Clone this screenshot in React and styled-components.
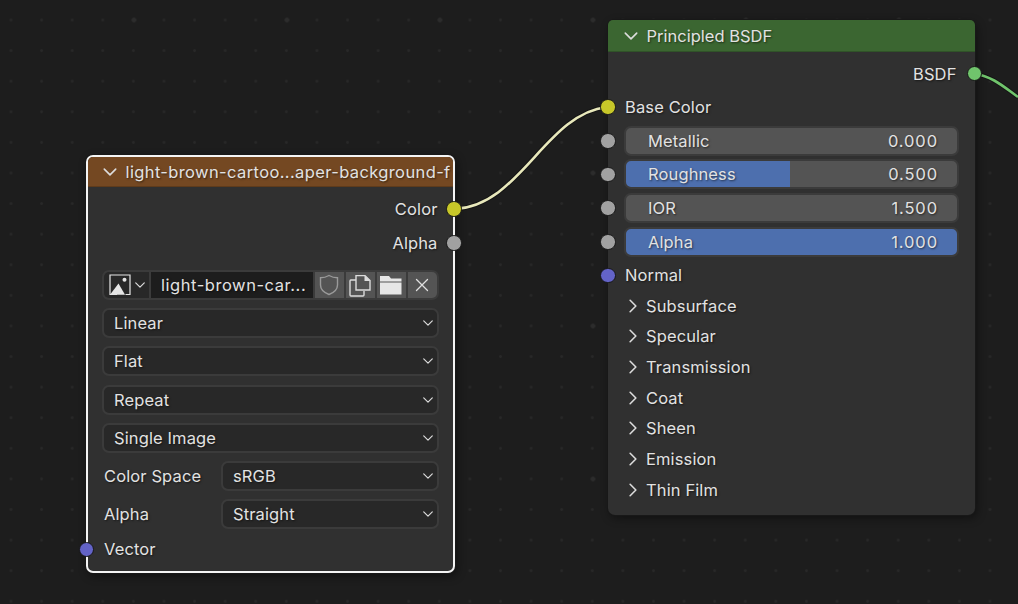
import React from 'react'
import styled, { createGlobalStyle } from 'styled-components'

const GlobalStyle = createGlobalStyle`
  html, body {
    margin: 0;
    padding: 0;
    background: #1d1d1d;
  }
`

const Canvas = styled.div`
  position: relative;
  width: 1018px;
  height: 604px;
  overflow: hidden;
  font-family: Inter, "Noto Sans", sans-serif;
  font-size: 16.5px;
  letter-spacing: 0.12px;
  color: #e2e2e2;
  text-shadow: 1px 1px 2px rgba(0, 0, 0, 0.55);
  background-color: #1d1d1d;
  background-image:
    radial-gradient(circle, #2c2c2c 0, #2c2c2c 2px, transparent 2.6px),
    radial-gradient(circle, #282828 0, #272727 1.1px, transparent 1.8px);
  background-size: 153px 153px, 30.6px 30.6px;
  background-position: 57.5px -56.5px, -4.3px 4.7px;
`

const Wires = styled.svg`
  position: absolute;
  left: 0;
  top: 0;
  width: 1018px;
  height: 604px;
`

const Node = styled.div`
  position: absolute;
  left: ${p => p.$x}px;
  top: ${p => p.$y}px;
  width: ${p => p.$w}px;
  height: ${p => p.$h}px;
  box-sizing: border-box;
  display: flex;
  flex-direction: column;
  background: #303030;
  border-radius: 7px;
  border: ${p => (p.$selected ? '2px solid #f4f4f4' : '0 solid transparent')};
  box-shadow: 0 0 0 1px #181818, 2px 3px 10px rgba(0, 0, 0, 0.45);
`

const Header = styled.div`
  flex: none;
  box-sizing: border-box;
  height: ${p => p.$h}px;
  display: flex;
  align-items: center;
  gap: 7.5px;
  padding-left: ${p => p.$pad}px;
  background: ${p => p.$color};
  border-radius: 5px 5px 0 0;
  white-space: nowrap;
  overflow: hidden;
  letter-spacing: ${p => p.$spacing || 0}px;
  box-shadow: inset 0 -1px 0 rgba(0, 0, 0, 0.18);
`

const Body = styled.div`
  flex: none;
  display: flex;
  flex-direction: column;
  gap: ${p => p.$gap}px;
  padding: ${p => p.$top}px ${p => p.$right}px 0 ${p => p.$left}px;
`

const SocketRow = styled.div`
  position: relative;
  flex: none;
  height: 28px;
  margin-top: ${p => p.$lift || 0}px;
  display: flex;
  align-items: center;
  justify-content: ${p => (p.$output ? 'flex-end' : 'flex-start')};
`

const Socket = styled.span`
  position: absolute;
  top: 50%;
  ${p => (p.$output ? `right: ${p.$off}px;` : `left: ${p.$off}px;`)}
  width: 13.5px;
  height: 13.5px;
  margin-top: -7.75px;
  border-radius: 50%;
  border: 1px solid #161616;
  background: ${p => p.$color};
`

const Dropdown = styled.div`
  flex: ${p => (p.$grow ? 1 : 'none')};
  box-sizing: border-box;
  height: 30px;
  display: flex;
  align-items: center;
  justify-content: space-between;
  padding: 0 3px 0 10px;
  background: #282828;
  border: 2px solid #3b3b3b;
  border-radius: 7px;
`

const FieldRow = styled.div`
  flex: none;
  height: 30px;
  display: flex;
  align-items: center;
`

const FieldLabel = styled.span`
  flex: none;
  width: 119px;
  padding-left: 2px;
  box-sizing: border-box;
`

const VectorLabel = styled.span`
  padding-left: 2px;
`

const OutputLabel = styled.span`
  padding-right: ${p => p.$pad}px;
`

const ImageBar = styled.div`
  flex: none;
  box-sizing: border-box;
  height: 30px;
  display: flex;
  align-items: stretch;
  gap: 2px;
  padding: 2px;
  margin-top: 13px;
  background: #3b3b3b;
  border-radius: 7px;
`

const ImagePicker = styled.div`
  flex: none;
  width: 45px;
  display: flex;
  align-items: center;
  gap: 3px;
  padding-left: 5px;
  box-sizing: border-box;
  background: #282828;
  border-radius: 5px 0 0 5px;
`

const NameField = styled.div`
  flex: 1;
  min-width: 0;
  display: flex;
  align-items: center;
  padding-left: 10px;
  background: #1d1d1d;
  white-space: nowrap;
  letter-spacing: 0.55px;
`

const IconButton = styled.div`
  flex: none;
  width: 29px;
  display: flex;
  align-items: center;
  justify-content: center;
  background: #545454;
  border-radius: ${p => (p.$last ? '0 5px 5px 0' : '0')};
`

const Slider = styled.div`
  flex: none;
  box-sizing: border-box;
  width: calc(100% + 1.5px);
  height: 30px;
  margin-left: -1.5px;
  display: flex;
  align-items: center;
  justify-content: space-between;
  padding: 0 18.5px 0 22.5px;
  border: 2px solid #3b3b3b;
  border-radius: 7px;
  background: linear-gradient(
    to right,
    #4d6fae ${p => p.$fill}%,
    #545454 ${p => p.$fill}%
  );
`

const SliderValue = styled.span`
  letter-spacing: 0.9px;
`

const PanelList = styled.div`
  display: flex;
  flex-direction: column;
  margin-top: -4.67px;
`

const PanelRow = styled.div`
  flex: none;
  height: 30.67px;
  display: flex;
  align-items: center;
  gap: 5px;
`

const IconSvg = styled.svg`
  flex: none;
`

const Chevron = ({ dir = 'down', size = 16, width = 1.4, color = '#dcdcdc' }) => (
  <IconSvg width={size} height={size} viewBox="0 0 14 14" fill="none">
    <path
      d={dir === 'down' ? 'M2 4.5 L7 9.5 L12 4.5' : 'M4.5 2 L9.5 7 L4.5 12'}
      stroke={color}
      strokeWidth={width}
      strokeLinecap="round"
      strokeLinejoin="round"
    />
  </IconSvg>
)

const ImageIcon = () => (
  <IconSvg width="22" height="22" viewBox="0 0 22 22" fill="none">
    <path d="M8 20.5 H1 V1 H21 V20.5 H16.5 M21 20.5 H18" stroke="#e6e6e6" strokeWidth="1.2" />
    <path d="M1 20.8 L9.5 9.5 L16 20.8 Z" fill="#e6e6e6" />
    <circle cx="15.5" cy="5.8" r="2" fill="#e6e6e6" />
  </IconSvg>
)

const ShieldIcon = () => (
  <svg width="20" height="22" viewBox="0 0 20 22" fill="none">
    <path
      d="M10 1.5 C13 3.2 15.5 3.8 18.5 3.8 V11 C18.5 15.5 14.5 18.8 10 20.5 C5.5 18.8 1.5 15.5 1.5 11 V3.8 C4.5 3.8 7 3.2 10 1.5 Z"
      stroke="#9a9a9a"
      strokeWidth="1.4"
    />
  </svg>
)

const CopyIcon = () => (
  <svg width="22" height="23" viewBox="0 0 22 23" fill="none">
    <path d="M7 6 H1.8 Q1 6 1 7 V21 Q1 22 2 22 H14 Q15 22 15 21 V17" stroke="#dcdcdc" strokeWidth="1.4" />
    <path d="M7 1.6 H16 L21 6.5 V16 H7 Z" stroke="#dcdcdc" strokeWidth="1.4" />
    <path d="M15.5 1 V7 H21.5 Z" fill="#dcdcdc" />
  </svg>
)

const FolderIcon = () => (
  <svg width="22" height="20" viewBox="0 0 22 20" fill="none">
    <path d="M0 1 H9 L11 3.5 H21.5 V6.5 H0 Z" fill="#e6e6e6" />
    <path d="M0 7.5 H21.5 V19.5 H0 Z" fill="#e6e6e6" />
  </svg>
)

const CloseIcon = () => (
  <svg width="14" height="14" viewBox="0 0 14 14" fill="none">
    <path d="M1.5 1.5 L12.5 12.5 M12.5 1.5 L1.5 12.5" stroke="#e0e0e0" strokeWidth="1.3" strokeLinecap="round" />
  </svg>
)

const SOCKET = {
  color: '#c7c729',
  value: '#a1a1a1',
  vector: '#6363c7',
  shader: '#70c46c',
}

const imageModes = ['Linear', 'Flat', 'Repeat', 'Single Image']
const imageFields = [
  ['Color Space', 'sRGB'],
  ['Alpha', 'Straight'],
]
const sliders = [
  ['Metallic', '0.000', 0],
  ['Roughness', '0.500', 49.4],
  ['IOR', '1.500', 0],
  ['Alpha', '1.000', 100],
]
const panels = ['Subsurface', 'Specular', 'Transmission', 'Coat', 'Sheen', 'Emission', 'Thin Film']

function ImageNode() {
  return (
    <Node $x={86} $y={155} $w={369} $h={418} $selected>
      <Header $h={30} $color="#744822" $pad={14} $spacing={0.38}>
        <Chevron />
        <span>light-brown-cartoo...aper-background-f</span>
      </Header>
      <Body $gap={6} $top={8} $right={14.5} $left={14}>
        <SocketRow $output>
          <OutputLabel $pad={1}>Color</OutputLabel>
          <Socket $output $off={-23} $color={SOCKET.color} />
        </SocketRow>
        <SocketRow $output>
          <OutputLabel $pad={1}>Alpha</OutputLabel>
          <Socket $output $off={-23} $color={SOCKET.value} />
        </SocketRow>
      </Body>
      <Body $gap={8.2} $top={0} $right={14.5} $left={14}>
        <ImageBar>
          <ImagePicker>
            <ImageIcon />
            <Chevron size={12} />
          </ImagePicker>
          <NameField>light-brown-car...</NameField>
          <IconButton><ShieldIcon /></IconButton>
          <IconButton><CopyIcon /></IconButton>
          <IconButton><FolderIcon /></IconButton>
          <IconButton $last><CloseIcon /></IconButton>
        </ImageBar>
        {imageModes.map(mode => (
          <Dropdown key={mode}>
            {mode}
            <Chevron size={12} />
          </Dropdown>
        ))}
        {imageFields.map(([label, value]) => (
          <FieldRow key={label}>
            <FieldLabel>{label}</FieldLabel>
            <Dropdown $grow>
              {value}
              <Chevron size={12} />
            </Dropdown>
          </FieldRow>
        ))}
        <SocketRow $lift={-2}>
          <VectorLabel>Vector</VectorLabel>
          <Socket $off={-23.5} $color={SOCKET.vector} />
        </SocketRow>
      </Body>
    </Node>
  )
}

function PrincipledNode() {
  return (
    <Node $x={608} $y={20} $w={367} $h={495}>
      <Header $h={32} $color="#3b6631" $pad={15}>
        <Chevron />
        <span>Principled BSDF</span>
      </Header>
      <Body $gap={5.67} $top={7.5} $right={16.5} $left={17}>
        <SocketRow $output>
          <OutputLabel $pad={2}>BSDF</OutputLabel>
          <Socket $output $off={-23.5} $color={SOCKET.shader} />
        </SocketRow>
        <SocketRow>
          Base Color
          <Socket $off={-25} $color={SOCKET.color} />
        </SocketRow>
        {sliders.map(([label, value, fill]) => (
          <SocketRow key={label}>
            <Socket $off={-25} $color={SOCKET.value} />
            <Slider $fill={fill}>
              <span>{label}</span>
              <SliderValue>{value}</SliderValue>
            </Slider>
          </SocketRow>
        ))}
        <SocketRow>
          Normal
          <Socket $off={-25} $color={SOCKET.vector} />
        </SocketRow>
        <PanelList>
          {panels.map(panel => (
            <PanelRow key={panel}>
              <Chevron dir="right" />
              {panel}
            </PanelRow>
          ))}
        </PanelList>
      </Body>
    </Node>
  )
}

export default function App() {
  return (
    <>
      <GlobalStyle />
      <Canvas>
        <Wires viewBox="0 0 1018 604" fill="none">
          <path d="M454 209 C520 207 545 114 607 107" stroke="#141414" strokeWidth="4.5" />
          <path d="M454 209 C520 207 545 114 607 107" stroke="#e8e8bb" strokeWidth="2.6" />
          <path d="M975 74 C992 76 1004 87 1018 97" stroke="#141414" strokeWidth="4.5" />
          <path d="M975 74 C992 76 1004 87 1018 97" stroke="#70c46c" strokeWidth="2.6" />
        </Wires>
        <ImageNode />
        <PrincipledNode />
      </Canvas>
    </>
  )
}
